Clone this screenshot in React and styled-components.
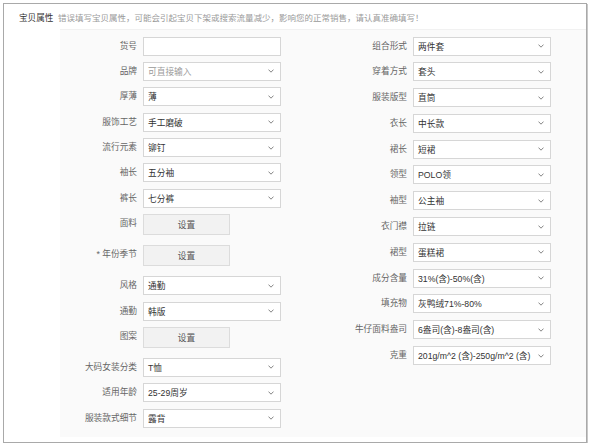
import styled, { createGlobalStyle } from "styled-components";

const GlobalStyle = createGlobalStyle`
  body {
    margin: 0;
    background: #ffffff;
    font-family: "Liberation Sans", "Noto Sans CJK SC", sans-serif;
  }
`;

const leftRows = [
  { label: "货号", kind: "input" },
  { label: "品牌", kind: "select", placeholder: "可直接输入" },
  { label: "厚薄", kind: "select", value: "薄" },
  { label: "服饰工艺", kind: "select", value: "手工磨破" },
  { label: "流行元素", kind: "select", value: "铆钉" },
  { label: "袖长", kind: "select", value: "五分袖" },
  { label: "裤长", kind: "select", value: "七分裤" },
  { label: "面料", kind: "button" },
  { label: "* 年份季节", kind: "button" },
  { label: "风格", kind: "select", value: "通勤" },
  { label: "通勤", kind: "select", value: "韩版" },
  { label: "图案", kind: "button" },
  { label: "大码女装分类", kind: "select", value: "T恤" },
  { label: "适用年龄", kind: "select", value: "25-29周岁" },
  { label: "服装款式细节", kind: "select", value: "露背" },
];

const rightRows = [
  { label: "组合形式", kind: "select", value: "两件套" },
  { label: "穿着方式", kind: "select", value: "套头" },
  { label: "服装版型", kind: "select", value: "直筒" },
  { label: "衣长", kind: "select", value: "中长款" },
  { label: "裙长", kind: "select", value: "短裙" },
  { label: "领型", kind: "select", value: "POLO领" },
  { label: "袖型", kind: "select", value: "公主袖" },
  { label: "衣门襟", kind: "select", value: "拉链" },
  { label: "裙型", kind: "select", value: "蛋糕裙" },
  { label: "成分含量", kind: "select", value: "31%(含)-50%(含)" },
  { label: "填充物", kind: "select", value: "灰鸭绒71%-80%" },
  { label: "牛仔面料盎司", kind: "select", value: "6盎司(含)-8盎司(含)" },
  { label: "克重", kind: "select", value: "201g/m^2 (含)-250g/m^2 (含)" },
];

export default function App() {
  return (
    <>
      <GlobalStyle />
      <Frame>
        <Header>
          <Title>宝贝属性</Title>
          <Hint>错误填写宝贝属性，可能会引起宝贝下架或搜索流量减少，影响您的正常销售，请认真准确填写！</Hint>
        </Header>
        <Panel>
          <Column gap={6.4} labelWidth={77}>
            {leftRows.map((row) => (
              <FieldRow key={row.label} row={row} labelWidth={77} />
            ))}
          </Column>
          <Column gap={6.8} labelWidth={80} style={{ marginLeft: 46 }}>
            {rightRows.map((row) => (
              <FieldRow key={row.label} row={row} labelWidth={80} />
            ))}
          </Column>
        </Panel>
      </Frame>
    </>
  );
}

function FieldRow({ row, labelWidth }) {
  return (
    <Row button={row.kind === "button"}>
      <Label width={labelWidth}>{row.label}</Label>
      {row.kind === "button" && <SetButton>设置</SetButton>}
      {row.kind === "input" && <Field />}
      {row.kind === "select" && (
        <Field>
          {row.placeholder ? (
            <Placeholder>{row.placeholder}</Placeholder>
          ) : (
            <Value>{row.value}</Value>
          )}
          <Chevron />
        </Field>
      )}
    </Row>
  );
}

function Chevron() {
  return (
    <svg width="6" height="4" viewBox="0 0 6 4">
      <polyline points="0.5,0.6 3,3.2 5.5,0.6" fill="none" stroke="#777" strokeWidth="0.9" />
    </svg>
  );
}

const Frame = styled.div`
  margin: 3px 0 0 3px;
  width: 582px;
  height: 438px;
  border: 1px solid #a9a9a9;
  box-shadow: 1px 1px 0 #c8c8c8;
  display: flex;
  flex-direction: column;
  box-sizing: content-box;
`;

const Header = styled.div`
  height: 25px;
  display: flex;
  align-items: center;
  padding-left: 15px;
`;

const Title = styled.div`
  width: 39px;
  font-size: 8.6px;
  color: #333;
`;

const Hint = styled.div`
  font-size: 8.5px;
  color: #9a9a9a;
  white-space: nowrap;
`;

const Panel = styled.div`
  margin-left: 56px;
  height: 408px;
  background: #fafafa;
  border-top: 1px solid #f1f1f1;
  box-sizing: border-box;
  padding-top: 6.5px;
  display: flex;
  align-items: flex-start;
`;

const Column = styled.div`
  display: flex;
  flex-direction: column;
  gap: ${(p) => p.gap}px;
`;

const Row = styled.div`
  display: flex;
  align-items: flex-start;
  gap: 6px;
  margin-bottom: ${(p) => (p.button ? "3.6px" : "0")};
`;

const Label = styled.div`
  width: ${(p) => p.width}px;
  text-align: right;
  font-size: 8.7px;
  line-height: 18px;
  color: #666;
  white-space: nowrap;
`;

const Field = styled.div`
  width: 138px;
  height: 19px;
  box-sizing: border-box;
  background: #fff;
  border: 1px solid #d6d6d6;
  display: flex;
  align-items: center;
  justify-content: space-between;
  padding: 0 6px 0 4px;
  font-size: 8.7px;
`;

const Value = styled.span`
  color: #333;
  white-space: nowrap;
`;

const Placeholder = styled.span`
  color: #999;
`;

const SetButton = styled.div`
  width: 87px;
  height: 21px;
  box-sizing: border-box;
  background: #f2f2f2;
  border: 1px solid #dcdcdc;
  display: flex;
  align-items: center;
  justify-content: center;
  font-size: 8.7px;
  color: #555;
`;
